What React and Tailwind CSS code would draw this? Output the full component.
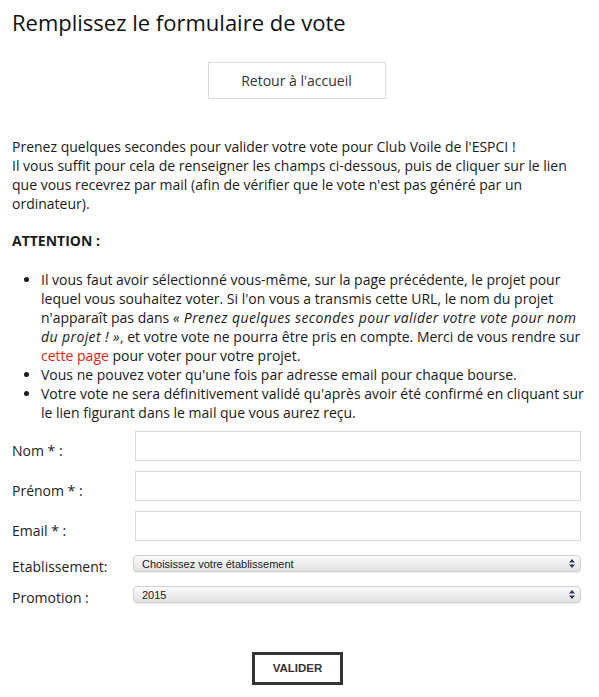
const font = { fontFamily: '"Open Sans", "Noto Sans", sans-serif' };

function Field({ label }) {
  return (
    <div className="flex items-end">
      <label className="w-[123px] shrink-0 pb-[1px] text-[14px] leading-[19px] text-[#222]">{label}</label>
      <input
        type="text"
        className="h-[30px] flex-1 border border-[#d9d9d9] bg-white px-2 outline-none"
      />
    </div>
  );
}

function Select({ label, value }) {
  return (
    <div className="flex h-[31px] items-start">
      <label className="mt-[2px] w-[121px] shrink-0 text-[14px] leading-[19px] text-[#222]">{label}</label>
      <div className="relative flex-1">
        <select
          defaultValue={value}
          className="block h-[17px] w-full appearance-none rounded-[4px] border border-[#cfcfcf] bg-gradient-to-b from-[#fafafa] via-[#eeeeee] to-[#e2e2e2] pl-[8px] text-[11px] leading-[14px] text-[#222] shadow-[0_1px_1px_rgba(0,0,0,0.08)] outline-none [font-family:'Liberation_Sans',Arial,sans-serif]"
        >
          <option>{value}</option>
        </select>
        <svg
          className="pointer-events-none absolute right-[6px] top-[4px]"
          width="6"
          height="9"
          viewBox="0 0 6 9"
        >
          <path d="M3 0 L6 3.5 L0 3.5 Z" fill="#2b3a5c" />
          <path d="M0 5.5 L6 5.5 L3 9 Z" fill="#2b3a5c" />
        </svg>
      </div>
    </div>
  );
}

export default function App() {
  return (
    <div className="min-h-[697px] bg-white px-3 text-[#1a1a1a]" style={font}>
      <h1 className="pt-[7px] text-[22px] leading-[30px] text-[#111]">Remplissez le formulaire de vote</h1>

      <div className="mt-[25px] flex justify-center pr-[6px]">
        <button className="h-[37px] w-[178px] border border-[#dcdcdc] bg-white text-[14px] text-[#333]">
          Retour à l'accueil
        </button>
      </div>

      <p className="mt-[38px] text-[14px] leading-[19px] text-[#1a1a1a]">
        Prenez quelques secondes pour valider votre vote pour Club Voile de l'ESPCI !
        <br />
        Il vous suffit pour cela de renseigner les champs ci-dessous, puis de cliquer sur le lien que vous recevrez
        par mail (afin de vérifier que le vote n'est pas généré par un ordinateur).
      </p>

      <p className="mt-[18px] text-[14px] font-bold leading-[19px]">ATTENTION :</p>

      <ul className="mt-[20px] list-disc pl-[29px] text-[14px] leading-[19px]">
        <li>
          Il vous faut avoir sélectionné vous-même, sur la page précédente, le projet pour lequel vous souhaitez
          voter. Si l'on vous a transmis cette URL, le nom du projet n'apparaît pas dans{' '}
          <em className="tracking-[0.4px]">« Prenez quelques secondes pour valider votre vote pour nom du projet ! »</em>,
          et votre vote ne pourra être pris en compte. Merci de vous rendre sur{' '}
          <span className="text-[#e2231a]">cette page</span> pour voter pour votre projet.
        </li>
        <li>Vous ne pouvez voter qu'une fois par adresse email pour chaque bourse.</li>
        <li>
          Votre vote ne sera définitivement validé qu'après avoir été confirmé en cliquant sur le lien figurant dans
          le mail que vous aurez reçu.
        </li>
      </ul>

      <div className="mt-[9px] flex flex-col gap-[10px] pr-[6px]">
        <Field label="Nom * :" />
        <Field label="Prénom * :" />
        <Field label="Email * :" />
      </div>

      <div className="mt-[14px] flex flex-col pr-[6px]">
        <Select label="Etablissement:" value="Choisissez votre établissement" />
        <Select label="Promotion :" value="2015" />
      </div>

      <div className="mt-[35px] flex justify-center pr-[4px]">
        <button className="h-[33px] w-[91px] border-[3px] border-[#333] bg-white text-[11.5px] font-bold text-[#333] [font-family:'Liberation_Sans',Arial,sans-serif]">
          VALIDER
        </button>
      </div>
    </div>
  );
}
